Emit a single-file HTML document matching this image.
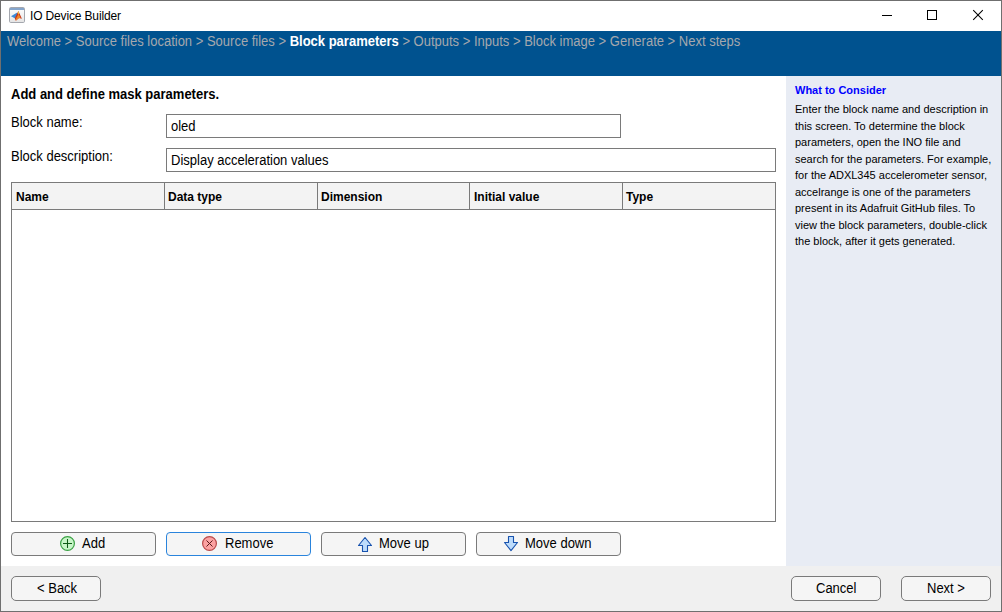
<!DOCTYPE html>
<html><head><meta charset="utf-8">
<style>
*{box-sizing:border-box;margin:0;padding:0}
html,body{width:1002px;height:612px;overflow:hidden;background:#fff}
body{font-family:"Liberation Sans",sans-serif;position:relative;color:#000}
.a{position:absolute}
.s{display:inline-block;font-size:14px;line-height:16px;white-space:nowrap;transform:translateY(-1px) scaleX(0.9286);transform-origin:0 0}
.sc{transform-origin:50% 0}
#win{left:0;top:0;width:1002px;height:612px;border:1px solid #6f6f6f}
#crumb{left:1px;top:31px;width:1000px;height:45px;background:#00528f}
.cr{color:#a5a8ad}
#right{left:786px;top:76px;width:215px;height:490px;background:#e8ecf4}
#bottom{left:1px;top:566px;width:1000px;height:45px;background:#f0f0f0}
.inp{border:1px solid #7a7a7a;background:#fff}
#tbl{left:11px;top:182px;width:765px;height:340px;border:1px solid #7a7a7a;background:#fff}
#thead{left:0;top:0;width:763px;height:27px;background:#f3f3f3;border-bottom:1px solid #7a7a7a}
.th{font-size:12px;font-weight:bold;top:7px;line-height:14px;white-space:nowrap}
.vl{top:0;width:1px;height:27px;background:#7a7a7a}
.btn{border:1px solid #7a7a7a;border-radius:4px;background:#f5f5f5}
.help{left:795px;font-size:11px;line-height:16.5px;white-space:nowrap}
</style></head><body>
<div id="win" class="a"></div>
<!-- title bar -->
<svg class="a" style="left:9px;top:7px" width="16" height="16" viewBox="0 0 16 16">
 <defs><linearGradient id="ig" x1="0" y1="0" x2="0" y2="1"><stop offset="0" stop-color="#ffffff"/><stop offset="1" stop-color="#e4e4e4"/></linearGradient></defs>
 <rect x="0.5" y="0.5" width="15" height="15" rx="1.2" fill="url(#ig)" stroke="#a4a7ae"/>
 <rect x="1" y="1" width="14" height="2" fill="#86a6cc"/>
 <path d="M2 9.3 L7.8 5.8 L9 8 L5.8 11.3 Z" fill="#3c8ad8"/>
 <path d="M5.8 11.3 L9.4 4 L12.9 11.7 L10 11 L6.8 13.7 Z" fill="#c8361a"/>
 <path d="M7.2 11.2 L9.6 7 L11.6 11 L9.6 11.3 L6.8 13.7 Z" fill="#f0862a"/>
 <path d="M9.2 4.3 L10.2 6 L9.6 7.8 L8.9 6 Z" fill="#f5d040"/>
</svg>
<div class="a" style="left:30px;top:9px;font-size:12px;line-height:14px;letter-spacing:-0.15px;white-space:nowrap">IO Device Builder</div>
<svg class="a" style="left:870px;top:0" width="131" height="31" viewBox="0 0 131 31">
 <rect x="12" y="15" width="10" height="1" fill="#000"/>
 <rect x="57.5" y="10.5" width="9" height="9" fill="none" stroke="#000"/>
 <path d="M103.2 10.2 L112.8 19.8 M112.8 10.2 L103.2 19.8" stroke="#000" stroke-width="1.05"/>
</svg>
<div id="crumb" class="a"></div>
<div class="a" style="left:7px;top:33px"><span class="s cr">Welcome &gt; Source files location &gt; Source files &gt; <b style="color:#fff">Block parameters</b> &gt; Outputs &gt; Inputs &gt; Block image &gt; Generate &gt; Next steps</span></div>
<div id="right" class="a"></div>
<div id="bottom" class="a"></div>
<div class="a" style="left:11px;top:86px"><span class="s" style="font-weight:bold">Add and define mask parameters.</span></div>
<div class="a" style="left:11px;top:114px"><span class="s">Block name:</span></div>
<div class="a" style="left:11px;top:148px"><span class="s">Block description:</span></div>
<div class="a inp" style="left:166px;top:114px;width:455px;height:24px"></div>
<div class="a" style="left:171px;top:118px"><span class="s">oled</span></div>
<div class="a inp" style="left:166px;top:148px;width:610px;height:24px"></div>
<div class="a" style="left:171px;top:152px"><span class="s">Display acceleration values</span></div>
<div id="tbl" class="a">
 <div id="thead" class="a">
  <div class="a th" style="left:4px">Name</div>
  <div class="a vl" style="left:152px"></div>
  <div class="a th" style="left:156px">Data type</div>
  <div class="a vl" style="left:305px"></div>
  <div class="a th" style="left:309px">Dimension</div>
  <div class="a vl" style="left:457px"></div>
  <div class="a th" style="left:462px">Initial value</div>
  <div class="a vl" style="left:610px"></div>
  <div class="a th" style="left:614px">Type</div>
 </div>
</div>
<!-- buttons -->
<div class="a btn" style="left:11px;top:532px;width:145px;height:24px"></div>
<svg class="a" style="left:60px;top:536px" width="16" height="16" viewBox="0 0 16 16">
 <circle cx="7.5" cy="7.5" r="6.9" fill="#c8f5c8" stroke="#3aa044" stroke-width="1.2"/>
 <path d="M3 7.5 H12 M7.5 3 V12" stroke="#0e5a16" stroke-width="1.05"/>
</svg>
<div class="a" style="left:82px;top:535px"><span class="s">Add</span></div>
<div class="a btn" style="left:166px;top:532px;width:145px;height:24px;border-color:#2a84dc"></div>
<svg class="a" style="left:202px;top:536px" width="16" height="16" viewBox="0 0 16 16">
 <circle cx="7.5" cy="7.5" r="6.9" fill="#fca2a2" stroke="#b84a4a" stroke-width="1.2"/>
 <path d="M4.5 4.5 L10.5 10.5 M10.5 4.5 L4.5 10.5" stroke="#5a1a1a" stroke-width="1"/>
</svg>
<div class="a" style="left:225px;top:535px"><span class="s">Remove</span></div>
<div class="a btn" style="left:321px;top:532px;width:145px;height:24px"></div>
<svg class="a" style="left:357px;top:536px" width="16" height="17" viewBox="0 0 16 17">
 <path d="M8 1.5 L14.5 9.5 H10.5 V15.5 H5.5 V9.5 H1.5 Z" fill="#bddcfc" stroke="#1752ae" stroke-width="1.1" stroke-linejoin="round"/>
</svg>
<div class="a" style="left:379px;top:535px"><span class="s">Move up</span></div>
<div class="a btn" style="left:476px;top:532px;width:145px;height:24px"></div>
<svg class="a" style="left:503px;top:535px" width="16" height="17" viewBox="0 0 16 17">
 <path d="M8 15.6 L14.5 7.5 H10.5 V1.5 H5.5 V7.5 H1.5 Z" fill="#bddcfc" stroke="#1752ae" stroke-width="1.1" stroke-linejoin="round"/>
</svg>
<div class="a" style="left:525px;top:535px"><span class="s">Move down</span></div>
<div class="a btn" style="left:11px;top:576px;width:90px;height:25px;border-radius:5px"></div>
<div class="a" style="left:37px;top:580px"><span class="s">&lt; Back</span></div>
<div class="a btn" style="left:791px;top:576px;width:90px;height:25px;border-radius:5px"></div>
<div class="a" style="left:816px;top:580px"><span class="s">Cancel</span></div>
<div class="a btn" style="left:901px;top:576px;width:90px;height:25px;border-radius:5px"></div>
<div class="a" style="left:927px;top:580px"><span class="s">Next &gt;</span></div>
<!-- help -->
<div class="a" style="left:795px;top:84px;font-size:11px;font-weight:bold;color:#0000ff;line-height:13px;white-space:nowrap">What to Consider</div>
<div class="a help" style="top:101px">Enter the block name and description in<br>this screen. To determine the block<br>parameters, open the INO file and<br>search for the parameters. For example,<br>for the ADXL345 accelerometer sensor,<br>accelrange is one of the parameters<br>present in its Adafruit GitHub files. To<br>view the block parameters, double-click<br>the block, after it gets generated.</div>
</body></html>
